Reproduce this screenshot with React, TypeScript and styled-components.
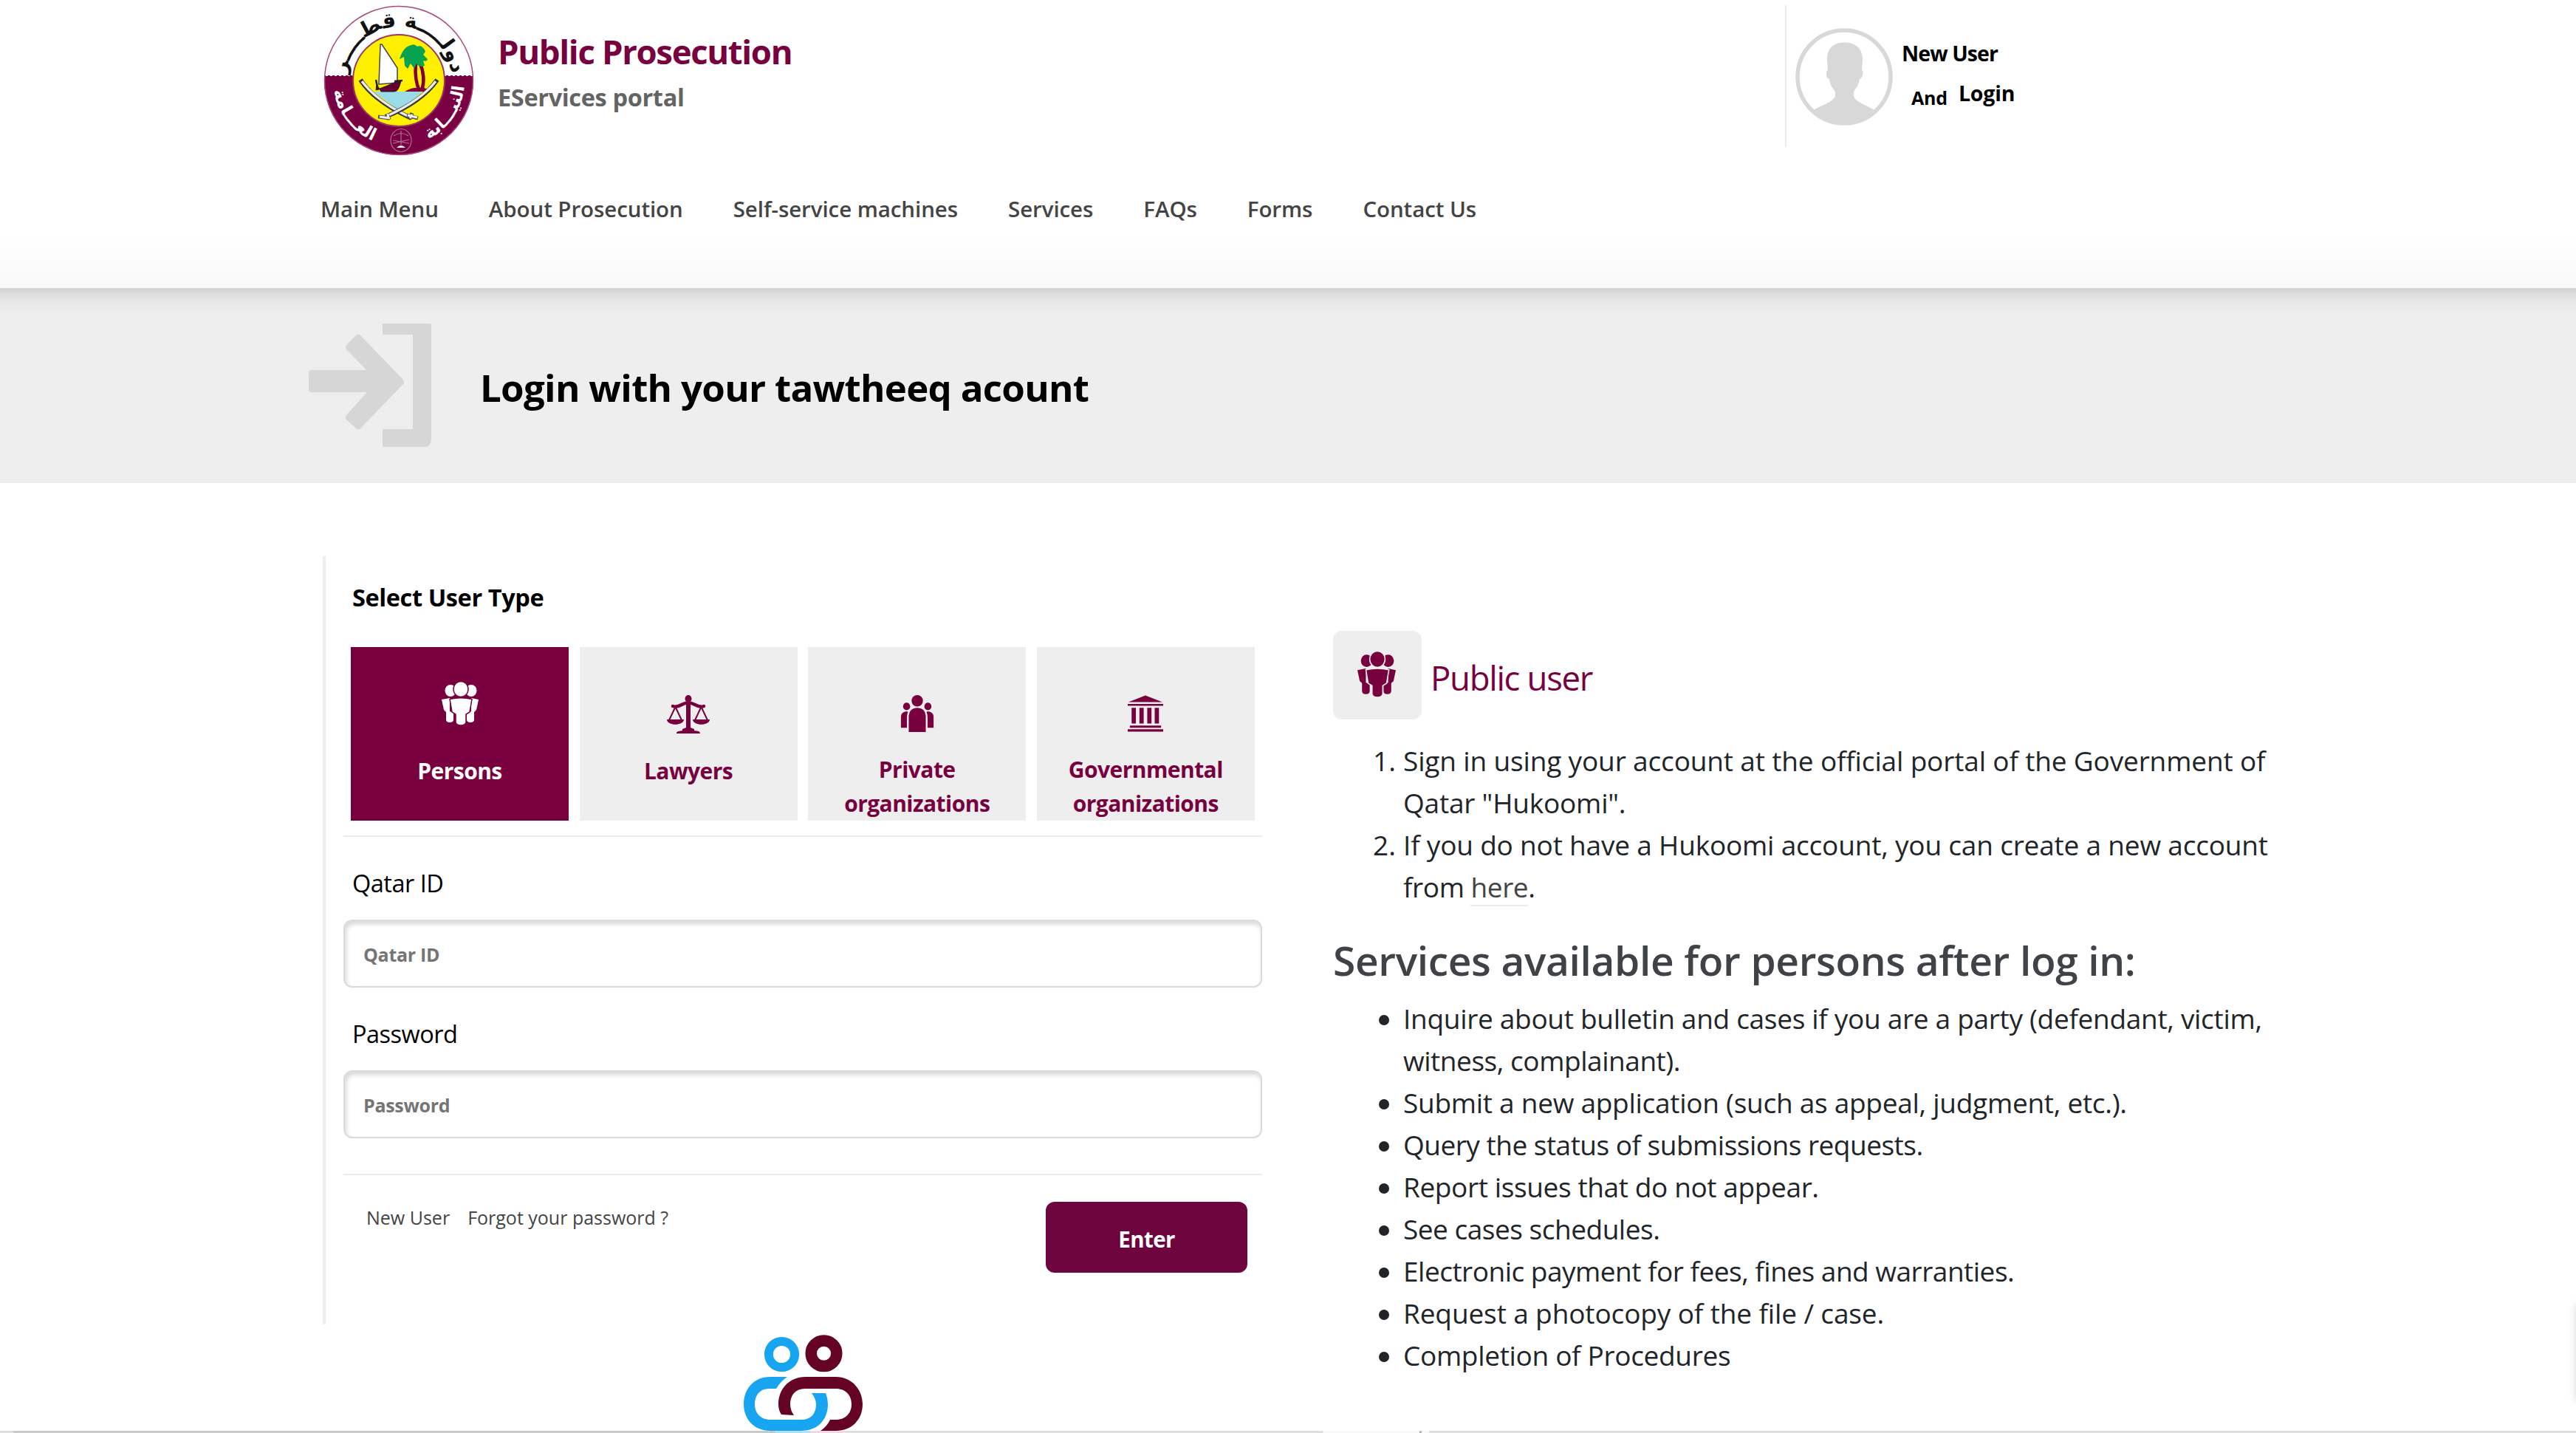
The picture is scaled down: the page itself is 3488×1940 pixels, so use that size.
import { ReactNode } from 'react';
import styled, { createGlobalStyle } from 'styled-components';

const maroon = '#78003f';

const GlobalStyle = createGlobalStyle`
  * {
    box-sizing: border-box;
  }

  body {
    margin: 0;
    background: #fff;
    color: #000;
    font-family: 'Open Sans', 'Noto Sans', sans-serif;
    overflow: hidden;
  }

  a {
    color: inherit;
    text-decoration: none;
  }
`;

const Page = styled.div`
  height: 1940px;
  display: flex;
  flex-direction: column;
  overflow: hidden;
`;

const Header = styled.header`
  height: 390px;
  flex: none;
  padding-left: 434px;
  background: linear-gradient(#fff 320px, #f8f8f8 390px);
`;

const TopRow = styled.div`
  height: 218px;
  display: flex;
  align-items: flex-start;
`;

const BrandText = styled.div`
  width: 1772px;
  padding: 36px 0 0 29px;
`;

const BrandTitle = styled.h1`
  margin: 0;
  font-size: 45.5px;
  line-height: 66px;
  font-weight: 700;
  letter-spacing: -1.33px;
  color: ${maroon};
  white-space: nowrap;
`;

const BrandSubtitle = styled.div`
  font-size: 32.5px;
  line-height: 60px;
  font-weight: 700;
  letter-spacing: -0.35px;
  color: #646464;
  white-space: nowrap;
`;

const UserBox = styled.div`
  height: 192px;
  margin-top: 7px;
  padding: 31px 0 0 12px;
  display: flex;
  border-left: 2px solid #ececec;
`;

const UserLinks = styled.div`
  padding: 14px 0 0 12px;
  font-size: 28.5px;
  line-height: 40px;
  font-weight: 700;
  letter-spacing: -0.9px;
  white-space: nowrap;
`;

const LoginLine = styled.div`
  display: flex;
  gap: 15px;
  padding: 14px 0 0 13px;
  letter-spacing: -0.2px;
`;

const AndWord = styled.span`
  padding-top: 6px;
  font-size: 25px;
`;

const Nav = styled.nav`
  display: flex;
  gap: 68px;
  padding-top: 41px;
  font-size: 29.5px;
  line-height: 48px;
  font-weight: 600;
  letter-spacing: -0.08px;
  color: #444;
  white-space: nowrap;
`;

const Banner = styled.section`
  height: 264px;
  flex: none;
  display: flex;
  padding: 48px 0 0 418px;
  background: linear-gradient(#d0d2d1, #e2e2e2 12px, #ebebeb 24px, #eee 34px);
`;

const BannerTitle = styled.h2`
  margin: 0;
  padding: 51px 0 0 65px;
  font-size: 51px;
  line-height: 70px;
  font-weight: 700;
  letter-spacing: -0.7px;
  white-space: nowrap;
`;

const Main = styled.main`
  height: 1283px;
  flex: none;
  display: flex;
  padding-left: 437px;
`;

const LoginColumn = styled.div`
  width: 1368px;
  padding-top: 99px;
`;

const Panel = styled.div`
  width: 1272px;
  height: 1040px;
  padding-left: 24px;
  border-left: 4px solid #eee;
`;

const PanelTitle = styled.h3`
  margin: 0;
  padding: 31px 0 0 12px;
  height: 123px;
  font-size: 32.5px;
  line-height: 50px;
  font-weight: 700;
  letter-spacing: -0.4px;
`;

const Tiles = styled.div`
  display: grid;
  grid-template-columns: repeat(4, 295px);
  gap: 14.6px;
  padding-left: 10px;
  height: 255px;
`;

const Tile = styled.button<{ $active?: boolean }>`
  height: 235px;
  padding: ${({ $active }) => ($active ? '47px' : '65px')} 0 0;
  border: 0;
  display: flex;
  flex-direction: column;
  align-items: center;
  justify-content: flex-start;
  background: ${({ $active }) => ($active ? maroon : '#eee')};
  color: ${({ $active }) => ($active ? '#fff' : maroon)};
  font: 700 30px/46px 'Open Sans', sans-serif;
  letter-spacing: -0.55px;
`;

const TileLabel = styled.span<{ $active?: boolean }>`
  margin-top: ${({ $active }) => ($active ? '39px' : '28px')};
  white-space: nowrap;
`;

const Rule = styled.div<{ $gap?: number }>`
  height: 2px;
  margin-top: ${({ $gap = 0 }) => $gap}px;
  background: #ebebeb;
`;

const Label = styled.label`
  display: block;
  padding-left: 12px;
  font-size: 32.5px;
  line-height: 50px;
  letter-spacing: -0.5px;
`;

const Field = styled.input`
  display: block;
  width: 1244px;
  height: 92px;
  margin-top: 24px;
  padding: 1px 25px 0;
  border: 2px solid #dadada;
  border-radius: 12px;
  outline: 0;
  background: #fff;
  box-shadow: inset 2px 4px 6px rgba(0, 0, 0, 0.16);
  font: 700 25px 'Open Sans', sans-serif;
  letter-spacing: -0.3px;

  &::placeholder {
    color: #757575;
    opacity: 1;
  }
`;

const FieldGroup = styled.div`
  padding-top: 38px;
`;

const Actions = styled.div`
  display: flex;
  justify-content: space-between;
  padding: 36px 20px 0 31px;
`;

const SmallLinks = styled.div`
  display: flex;
  gap: 24px;
  font-size: 25px;
  line-height: 42px;
  color: #444;
  white-space: nowrap;
`;

const Submit = styled.button`
  width: 273px;
  height: 96px;
  padding: 4px 0 0;
  border: 0;
  border-radius: 12px;
  background: #6e053f;
  color: #fff;
  font: 700 29.5px 'Open Sans', sans-serif;
  letter-spacing: -0.6px;
`;

const PartnerLogo = styled.div`
  padding: 12px 0 0 568px;
`;

const InfoColumn = styled.div`
  width: 1300px;
  padding-top: 200px;
  color: #212529;
`;

const InfoHead = styled.div`
  height: 120px;
  display: flex;
  color: ${maroon};
`;

const Badge = styled.div`
  width: 120px;
  height: 120px;
  padding: 28px 0 0 33px;
  border-radius: 12px;
  background: #eee;
`;

const InfoTitle = styled.div`
  padding: 30px 0 0 12px;
  font-size: 45.5px;
  line-height: 66px;
  letter-spacing: -1.3px;
`;

const List = styled.div<{ $top: number }>`
  padding-top: ${({ $top }) => $top}px;
  font-size: 37px;
`;

const TextLine = styled.div<{ $spacing?: number }>`
  display: flex;
  height: 57px;
  line-height: 57px;
  letter-spacing: ${({ $spacing = 0 }) => $spacing}px;
  white-space: nowrap;
`;

const Marker = styled.span`
  width: 95px;
  flex: none;
  padding-right: 10px;
  letter-spacing: 0;
  text-align: right;
`;

const Dot = styled.span`
  width: 14px;
  height: 14px;
  margin: 24px 19px 0 62px;
  flex: none;
  border-radius: 50%;
  background: #212529;
`;

const HereLink = styled.a`
  height: 55px;
  margin-left: 9px;
  color: #444;
  border-bottom: 2px solid #ebebeb;
`;

const ServicesTitle = styled.h2`
  margin: 0;
  padding-top: 36px;
  font-size: 55px;
  line-height: 70px;
  font-weight: 600;
  letter-spacing: -0.34px;
  color: #3f4247;
  white-space: nowrap;
`;

const BottomStrip = styled.div`
  height: 3px;
  flex: none;
  background: linear-gradient(
    90deg,
    #dedede 18px,
    #c8c8c8 18px 1050px,
    #b5e0f7 1050px 1097px,
    #efd9e2 1097px 1145px,
    #dedede 1145px 1791px,
    #f8f8f8 1791px 1922px,
    #bbb 1922px 1925px,
    #f8f8f8 1925px 1935px,
    #dedede 1935px
  );
`;

const SideWidget = styled.div`
  position: absolute;
  right: -20px;
  top: 1766px;
  width: 20px;
  height: 130px;
  box-shadow: 0 0 12px rgba(0, 0, 0, 0.16);
`;

const Emblem = () => (
  <svg width="211" height="218" viewBox="0 0 211 218">
    <defs>
      <path id="arc-top" d="M35 116 A71.500 71.500 0 1 1 177 116" />
      <path id="arc-bottom" d="M17 109 A89 89 0 0 0 195 109" />
    </defs>
    <circle cx="106" cy="109" r="101" fill="#fff" />
    <path d="M5 102 H207 V109 A101 101 0 0 1 5 109 Z" fill="#780043" />
    <path d="M7 102 H46 M167 102 H206" stroke="#fff" strokeWidth="2" strokeDasharray="3 3" />
    <circle cx="106" cy="109" r="100.500" fill="none" stroke="#a8487a" strokeWidth="1.500" />
    <circle cx="106" cy="109" r="62" fill="#fff000" stroke="#9c3560" strokeWidth="2" />
    <path d="M72 124 H138 L108 151 Z" fill="#9adbe8" />
    <path d="M81 60 L83 60 L104 92 L104 112 L79 114 Z" fill="#fff" stroke="#444" strokeWidth="1.500" />
    <path d="M76 114 L75 122 Q91 116 104 110 L109 109 Q106 124 100 124 H82 Z" fill="#640033" stroke="#222" />
    <path d="M75 108 L78 122 M100 110 L111 109" stroke="#222" strokeWidth="2.500" />
    <path d="M129 86 Q127 108 134 123 M134 84 Q143 104 137 123" fill="none" stroke="#7d0038" strokeWidth="4.500" />
    <path d="M114 124 Q124 118 133 119 Q143 118 149 124 Z" fill="#7d0038" />
    <path
      d="M123 61 Q112 63 107 80 L113 77 L114 89 L118 93 L122 86 L127 93 L130 86 Q134 92 141 89 L139 82 Q144 84 145 80 L139 74 L142 70 Q138 60 131 63 Q127 59 123 61 Z"
      fill="#06a351"
    />
    <path d="M54 108 Q74 138 123 160" fill="none" stroke="#333" strokeWidth="6" />
    <path d="M56 110 Q77 138 122 159" fill="none" stroke="#e9e9e9" strokeWidth="3.500" />
    <path d="M158 108 Q137 138 88 158" fill="none" stroke="#333" strokeWidth="6" />
    <path d="M156 110 Q136 136 90 157" fill="none" stroke="#e9e9e9" strokeWidth="3.500" />
    <path
      d="M78 158 L94 160 M90 154 L93 162 M117 156 L132 160 M121 161 L124 153"
      stroke="#555"
      strokeWidth="5"
    />
    <path
      d="M80 158 L94 160 M118 156 L131 159 M91 154 L92 161 M121 160 L124 155"
      stroke="#f1f1f1"
      strokeWidth="3"
    />
    <g fill="none" stroke="#b36d91" strokeWidth="1.200">
      <ellipse cx="109" cy="190" rx="14" ry="15.500" />
      <path d="M109 177 V196 M99 184 Q109 177 119 184 M98 190 L120 194 M98 194 L120 189" />
    </g>
    <path d="M103 200 Q109 194 115 200 Z" fill="#fff" />
    <text fontFamily="DejaVu Sans" fontSize="28" fontWeight="700" fill="#111">
      <textPath href="#arc-top" startOffset="50%" textAnchor="middle">
        دولــــة قطــــر
      </textPath>
    </text>
    <g fontFamily="DejaVu Sans" fontSize="23" fontWeight="700" fill="#fff">
      <text>
        <textPath href="#arc-bottom" startOffset="21%" textAnchor="middle">
          العـــامة
        </textPath>
      </text>
      <text>
        <textPath href="#arc-bottom" startOffset="81%" textAnchor="middle">
          النيـــابة
        </textPath>
      </text>
    </g>
  </svg>
);

const Avatar = () => (
  <svg width="132" height="132" viewBox="0 0 132 132">
    <defs>
      <clipPath id="avatar-clip">
        <circle cx="66" cy="66" r="65" />
      </clipPath>
    </defs>
    <circle cx="66" cy="66" r="63" fill="#fff" stroke="#d8d8d8" strokeWidth="5.500" />
    <path
      clipPath="url(#avatar-clip)"
      d="M66 19.500 C81 19.500 91 27 91 43 L90 57 C93 58 91 69 87 69 C86 77 82 81 79 86 V92 C81 101 98 104 108 112 V132 H24 V112 C34 104 51 101 54 92 V86 C50 81 47 77 46 69 C41 68 41 58 44 57 L43 43 C43 27 51 20 66 19.500 Z"
      fill="#d8d8d8"
    />
  </svg>
);

const EnterIcon = () => (
  <svg width="167" height="168" viewBox="0 0 167 168">
    <path d="M100 0 H164 Q166 0 166 2 V157 Q165 167 157 167 H100 V143 H141 V15 H100 Z" fill="#d6d6d6" />
    <path
      d="M4 63 H78 L51 35 Q49 32 51 29 L64 16 Q67 13 70 16 L128 76 Q130 79 128 82 L70 142 Q67 145 64 142 L51 130 Q48 127 51 124 L79 93 H4 Q0 93 0 89 V67 Q0 63 4 63 Z"
      fill="#d6d6d6"
    />
  </svg>
);

const PersonsIcon = ({ width, height, gap }: { width: number; height: number; gap: string }) => (
  <svg width={width} height={height} viewBox="0 0 50 59" preserveAspectRatio="none" fill="currentColor">
    <ellipse cx="12" cy="12" rx="7.500" ry="8" />
    <ellipse cx="40" cy="12" rx="7.500" ry="8" />
    <path d="M0 24 L11 22 V40 L16 42 V51 Q16 55 11 55 Q6 55 6 51 V41 L3 38 Z" />
    <path d="M50 24 L40 22 V40 L34 42 V51 Q34 55 39 55 Q44 55 44 51 V41 L47 38 Z" />
    <ellipse cx="26" cy="10" rx="10" ry="10.500" stroke={gap} strokeWidth="1.500" />
    <path
      d="M11 23.500 Q26 20 41 23.500 L38 41 L33 44 V55 Q32 59 26 59 Q20 59 19 55 V44 L14 41 Z"
      stroke={gap}
      strokeWidth="1.500"
    />
  </svg>
);

const ScalesIcon = () => (
  <svg width="58" height="52" viewBox="0 0 58 52" fill="currentColor">
    <ellipse cx="29" cy="5" rx="4.500" ry="5" />
    <path d="M26 9 H32 V44 L37 46 V48 L43 49 Q45 50 45 52 H13 Q13 49 16 49 L21 48 V46 L26 44 Z" />
    <path
      d="M8 15 Q13 17 20 13 Q29 8 38 13 Q45 17 50 15"
      fill="none"
      stroke="currentColor"
      strokeWidth="4.500"
      strokeLinecap="round"
    />
    <path d="M11 17 L3 34 M12 17 L20 34 M46 17 L38 34 M47 17 L55 34" stroke="currentColor" strokeWidth="2" />
    <path d="M0 33 H23 C23 42 0 42 0 33 Z M35 33 H58 C58 42 35 42 35 33 Z" />
  </svg>
);

const GroupIcon = () => (
  <svg width="46" height="52" viewBox="0 0 46 52" fill="currentColor">
    <circle cx="23" cy="8" r="8" />
    <ellipse cx="8" cy="16" rx="5" ry="5.300" />
    <ellipse cx="38" cy="16" rx="5" ry="5.300" />
    <path d="M11 52 V29 Q12 18 23 18 Q34 18 35 29 V52 Z" />
    <path d="M0 46 V30 Q1 23 9 23 Q9 24 10 24 Q8.500 27 8.500 31 V46 Z" />
    <path d="M46 46 V30 Q45 23 37 23 Q37 24 36 24 Q37.500 27 37.500 31 V46 Z" />
  </svg>
);

const BankIcon = () => (
  <svg width="50" height="52" viewBox="0 0 50 52" fill="currentColor">
    <path d="M25 0.500 L49 10 H1 Z" />
    <path d="M0 12.500 H50 V15 H0 Z M3 43 H47 V46 H3 Z M0 48 H50 V51.500 H0 Z" />
    <path d="M5.500 18 H11.500 V40 H5.500 Z M16.500 18 H22.500 V40 H16.500 Z M27.500 18 H33.500 V40 H27.500 Z M38 18 H44 V40 H38 Z" />
  </svg>
);

const LinkedPeople = () => (
  <svg width="164" height="132" viewBox="1005 1805 164 132" fill="none">
    <circle cx="1058.500" cy="1833.500" r="17.600" stroke="#17a5f2" strokeWidth="12" />
    <circle cx="1115.500" cy="1832.200" r="17.300" stroke="#650324" strokeWidth="15.500" />
    <path
      d="M1066 1864 H1043 C1020 1864 1007 1881 1007 1901 C1007 1922 1022 1937 1043 1937 H1085 C1107 1937 1121 1922 1121 1901 Q1121 1893 1118 1886 H1099 Q1105 1894 1105 1901 C1105 1914 1098 1922 1085 1922 H1043 C1030 1922 1022 1913 1022 1901 C1022 1889 1029 1880 1041 1880 H1051 Q1057 1870 1066 1864 Z"
      fill="#17a5f2"
    />
    <path
      d="M1091 1864 H1132 C1153 1864 1168 1881 1168 1901 C1168 1922 1153 1937 1132 1937 H1111 Q1120 1931 1124 1922 H1132 C1145 1922 1153 1913 1153 1901 C1153 1889 1145 1880 1132 1880 H1090 C1077 1880 1070 1889 1070 1901 Q1070 1909 1075 1916 L1058 1915 Q1054 1909 1054 1901 C1054 1881 1068 1864 1091 1864 Z"
      fill="#650324"
    />
  </svg>
);

const navItems = [
  'Main Menu',
  'About Prosecution',
  'Self-service machines',
  'Services',
  'FAQs',
  'Forms',
  'Contact Us',
];

const services = [
  { text: 'Inquire about bulletin and cases if you are a party (defendant, victim,', spacing: -0.3 },
  { text: 'witness, complainant).', spacing: -0.45, continued: true },
  { text: 'Submit a new application (such as appeal, judgment, etc.).', spacing: -0.27 },
  { text: 'Query the status of submissions requests.', spacing: -0.5 },
  { text: 'Report issues that do not appear.', spacing: -0.38 },
  { text: 'See cases schedules.', spacing: -0.48 },
  { text: 'Electronic payment for fees, fines and warranties.', spacing: -0.5 },
  { text: 'Request a photocopy of the file / case.', spacing: -0.12 },
  { text: 'Completion of Procedures', spacing: -0.32 },
];

const UserTypeTile = ({ icon, active, children }: { icon: ReactNode; active?: boolean; children: ReactNode }) => (
  <Tile $active={active}>
    {icon}
    <TileLabel $active={active}>{children}</TileLabel>
  </Tile>
);

const App = () => {
  return (
    <>
      <GlobalStyle />
      <Page>
        <Header>
          <TopRow>
            <Emblem />
            <BrandText>
              <BrandTitle>Public Prosecution</BrandTitle>
              <BrandSubtitle>EServices portal</BrandSubtitle>
            </BrandText>
            <UserBox>
              <Avatar />
              <UserLinks>
                <a href="#new">New User</a>
                <LoginLine>
                  <AndWord>And</AndWord>
                  <a href="#login">Login</a>
                </LoginLine>
              </UserLinks>
            </UserBox>
          </TopRow>
          <Nav>
            {navItems.map((item) => (
              <a key={item} href="#nav">
                {item}
              </a>
            ))}
          </Nav>
        </Header>
        <Banner>
          <EnterIcon />
          <BannerTitle>Login with your tawtheeq acount</BannerTitle>
        </Banner>
        <Main>
          <LoginColumn>
            <Panel>
              <PanelTitle>Select User Type</PanelTitle>
              <Tiles>
                <UserTypeTile active icon={<PersonsIcon width={50} height={59} gap={maroon} />}>
                  Persons
                </UserTypeTile>
                <UserTypeTile icon={<ScalesIcon />}>Lawyers</UserTypeTile>
                <UserTypeTile icon={<GroupIcon />}>
                  Private
                  <br />
                  organizations
                </UserTypeTile>
                <UserTypeTile icon={<BankIcon />}>
                  Governmental
                  <br />
                  organizations
                </UserTypeTile>
              </Tiles>
              <Rule />
              <FieldGroup>
                <Label>Qatar ID</Label>
                <Field placeholder="Qatar ID" />
              </FieldGroup>
              <FieldGroup>
                <Label>Password</Label>
                <Field type="password" placeholder="Password" />
              </FieldGroup>
              <Rule $gap={48} />
              <Actions>
                <SmallLinks>
                  <a href="#new">New User</a>
                  <a href="#forgot">Forgot your password ?</a>
                </SmallLinks>
                <Submit>Enter</Submit>
              </Actions>
            </Panel>
            <PartnerLogo>
              <LinkedPeople />
            </PartnerLogo>
          </LoginColumn>
          <InfoColumn>
            <InfoHead>
              <Badge>
                <PersonsIcon width={52} height={62} gap="#eee" />
              </Badge>
              <InfoTitle>Public user</InfoTitle>
            </InfoHead>
            <List $top={27}>
              <TextLine $spacing={-0.15}>
                <Marker>1.</Marker>Sign in using your account at the official portal of the Government of
              </TextLine>
              <TextLine $spacing={-0.2}>
                <Marker />
                Qatar "Hukoomi".
              </TextLine>
              <TextLine $spacing={-0.19}>
                <Marker>2.</Marker>If you do not have a Hukoomi account, you can create a new account
              </TextLine>
              <TextLine $spacing={-0.4}>
                <Marker />
                from <HereLink href="#here">here</HereLink>.
              </TextLine>
            </List>
            <ServicesTitle>Services available for persons after log in:</ServicesTitle>
            <List $top={15}>
              {services.map(({ text, spacing, continued }) => (
                <TextLine key={text} $spacing={spacing}>
                  {continued ? <Marker /> : <Dot />}
                  {text}
                </TextLine>
              ))}
            </List>
          </InfoColumn>
        </Main>
        <BottomStrip />
        <SideWidget />
      </Page>
    </>
  );
};

export default App;
